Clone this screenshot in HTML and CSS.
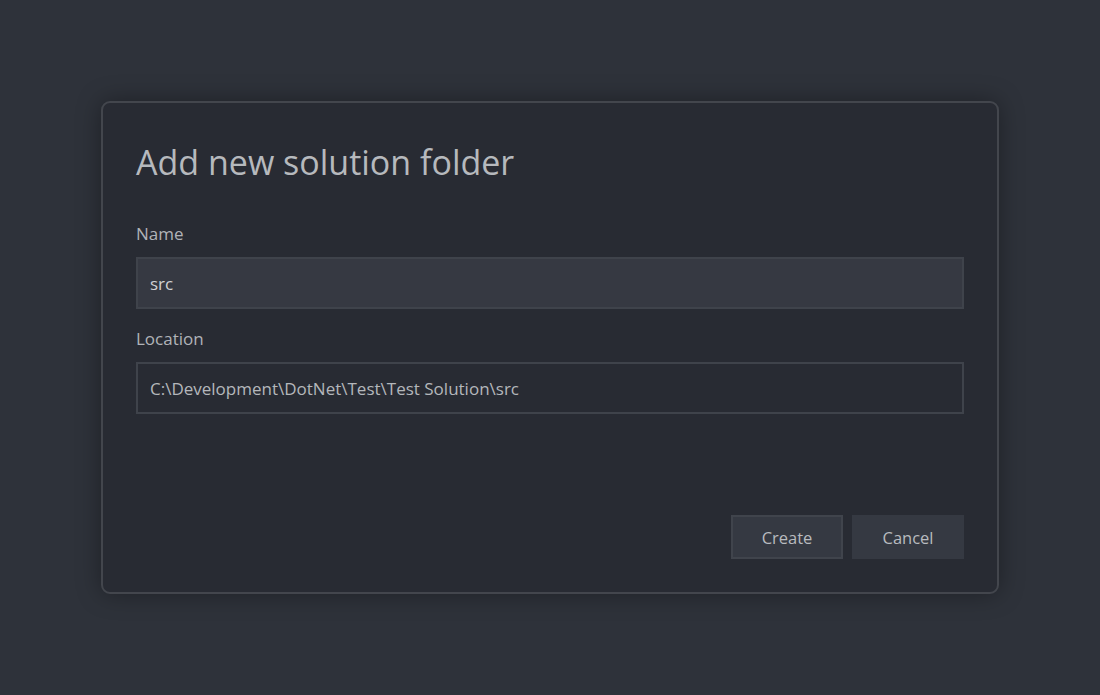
FILE: index.html
```html
<!DOCTYPE html>
<html>
<head>
<meta charset="utf-8">
<link rel="stylesheet" href="styles.css">
</head>
<body>
<div class="dialog">
  <h1 class="title">Add new solution folder</h1>
  <div class="field">
    <label class="label">Name</label>
    <div class="input input-active">src</div>
  </div>
  <div class="field">
    <label class="label">Location</label>
    <div class="input">C:\Development\DotNet\Test\Test Solution\src</div>
  </div>
  <div class="actions">
    <button class="btn btn-focus">Create</button>
    <button class="btn">Cancel</button>
  </div>
</div>
</body>
</html>
```

FILE: styles.css
```css
html, body {
  margin: 0;
  height: 100%;
}
body {
  background: #2e323a;
  display: flex;
  align-items: flex-start;
  justify-content: center;
  font-family: "Open Sans", "Noto Sans", sans-serif;
}
.dialog {
  margin-top: 101px;
  width: 898px;
  height: 493px;
  box-sizing: border-box;
  background: #282b33;
  border: 2px solid #43464d;
  border-radius: 9px;
  box-shadow: 0 0 24px rgba(0,0,0,0.35);
  padding: 35px 33px 33px 33px;
  display: flex;
  flex-direction: column;
}
.title {
  margin: 0 0 36px 0;
  font-size: 34px;
  font-weight: 400;
  color: #b6b9bd;
  line-height: 48px;
}
.field {
  display: flex;
  flex-direction: column;
  margin-bottom: 18px;
}
.label {
  font-size: 17px;
  color: #b0b3b8;
  line-height: 24px;
  margin-bottom: 11px;
}
.input {
  height: 52px;
  box-sizing: border-box;
  border: 2px solid #3f434b;
  background: #282b33;
  color: #b4b7bb;
  font-size: 17px;
  padding: 0 12px;
  display: flex;
  align-items: center;
}
.input-active {
  background: #363942;
  color: #d0d2d5;
}
.actions {
  margin-top: auto;
  display: flex;
  justify-content: flex-end;
  gap: 9px;
}
.btn {
  width: 112px;
  height: 44px;
  box-sizing: border-box;
  background: #353942;
  border: 2px solid #353942;
  color: #b8bbbf;
  font-family: inherit;
  font-size: 16.5px;
  padding: 0;
}
.btn-focus {
  border-color: #40444c;
}
```
